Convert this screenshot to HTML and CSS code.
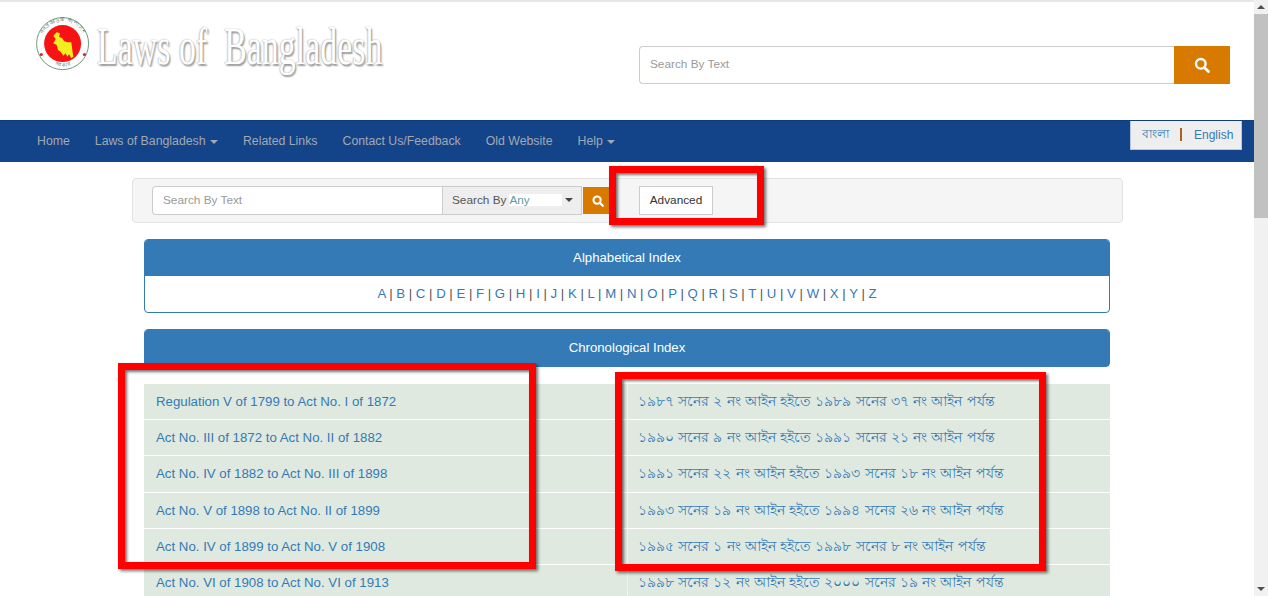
FILE: index.html
```html
<!DOCTYPE html>
<html lang="en">
<head>
<meta charset="utf-8">
<title>Laws of Bangladesh</title>
<link rel="stylesheet" href="styles.css">
</head>
<body>
<div class="shell">
  <div class="page">
    <header class="top">
      <a class="brand" href="#">
        <svg class="emblem" viewBox="0 0 54 54" width="54" height="54" aria-hidden="true">
          <defs>
            <path id="arc-top" d="M6.6 36A22.4 22.4 0 1 1 47.4 36"/>
            <path id="arc-bottom" d="M12 44A22.4 22.4 0 0 0 42 44"/>
          </defs>
          <circle cx="26.6" cy="26.6" r="26" fill="#fff" stroke="#6f9a7d" stroke-width="1"/>
          <text class="emblem-text"><textPath href="#arc-top" startOffset="50%" text-anchor="middle">গণপ্রজাতন্ত্রী বাংলাদেশ</textPath></text>
          <text class="emblem-text"><textPath href="#arc-bottom" startOffset="50%" text-anchor="middle">সরকার</textPath></text>
          <circle cx="26.6" cy="26.6" r="18.5" fill="#f71313"/>
          <path d="M20.7 15.3L24 16.3 23 19.7 26.3 21.3 28 24 31.3 25.3 35.3 25.3 36.3 33 37.3 39.7 35.3 41.3 33 37.3 31.3 39.7 29.7 36.3 27.3 38.7 24.7 34.7 22 33 20.7 28 17.3 26.3 19.7 22 17.3 18.7z" fill="#f5ee1e"/>
          <circle cx="5.3" cy="37.5" r="1.6" fill="#e02020"/>
          <circle cx="48.5" cy="37.5" r="1.6" fill="#e02020"/>
        </svg>
        <span class="wordmark">Laws of&nbsp; Bangladesh</span>
      </a>
      <form class="top-search">
        <input class="top-input" type="text" placeholder="Search By Text">
        <button class="top-btn" type="button" aria-label="Search">
          <svg viewBox="0 0 16 16" width="16" height="16"><circle cx="6.8" cy="6.8" r="4.8" fill="none" stroke="#fff" stroke-width="2.4"/><path d="M10.4 10.4l4 4" stroke="#fff" stroke-width="2.8" stroke-linecap="round"/></svg>
        </button>
      </form>
    </header>

    <nav class="nav">
      <a href="#">Home</a>
      <a href="#">Laws of Bangladesh <i class="caret"></i></a>
      <a href="#">Related Links</a>
      <a href="#">Contact Us/Feedback</a>
      <a href="#">Old Website</a>
      <a href="#">Help <i class="caret"></i></a>
      <div class="lang"><a href="#">বাংলা</a><span class="lang-sep"></span><a href="#">English</a></div>
    </nav>

    <main class="main">
      <form class="well">
        <input class="well-input" type="text" placeholder="Search By Text">
        <div class="well-select">
          <span>Search By</span>
          <span class="select-value">Any</span>
          <i class="caret dark"></i>
        </div>
        <button class="well-btn" type="button" aria-label="Search">
          <svg viewBox="0 0 16 16" width="12" height="12"><circle cx="6.8" cy="6.8" r="4.8" fill="none" stroke="#fff" stroke-width="2.8"/><path d="M10.4 10.4l4 4" stroke="#fff" stroke-width="3" stroke-linecap="round"/></svg>
        </button>
        <button class="advanced" type="button">Advanced</button>
      </form>

      <section class="panel">
        <h2 class="panel-head">Alphabetical Index</h2>
        <div class="alpha">
          <a href="#">A</a> | <a href="#">B</a> | <a href="#">C</a> | <a href="#">D</a> | <a href="#">E</a> | <a href="#">F</a> | <a href="#">G</a> | <a href="#">H</a> | <a href="#">I</a> | <a href="#">J</a> | <a href="#">K</a> | <a href="#">L</a> | <a href="#">M</a> | <a href="#">N</a> | <a href="#">O</a> | <a href="#">P</a> | <a href="#">Q</a> | <a href="#">R</a> | <a href="#">S</a> | <a href="#">T</a> | <a href="#">U</a> | <a href="#">V</a> | <a href="#">W</a> | <a href="#">X</a> | <a href="#">Y</a> | <a href="#">Z</a>
        </div>
      </section>

      <section class="panel bare">
        <h2 class="panel-head">Chronological Index</h2>
      </section>

      <div class="chrono">
        <a href="#">Regulation V of 1799 to Act No. I of 1872</a><a class="bn" href="#" lang="bn">১৯৮৭ সনের ২ নং আইন হইতে ১৯৮৯ সনের ৩৭ নং আইন পর্যন্ত</a>
        <a href="#">Act No. III of 1872 to Act No. II of 1882</a><a class="bn" href="#" lang="bn">১৯৯০ সনের ৯ নং আইন হইতে ১৯৯১ সনের ২১ নং আইন পর্যন্ত</a>
        <a href="#">Act No. IV of 1882 to Act No. III of 1898</a><a class="bn" href="#" lang="bn">১৯৯১ সনের ২২ নং আইন হইতে ১৯৯৩ সনের ১৮ নং আইন পর্যন্ত</a>
        <a href="#">Act No. V of 1898 to Act No. II of 1899</a><a class="bn" href="#" lang="bn">১৯৯৩ সনের ১৯ নং আইন হইতে ১৯৯৪ সনের ২৬ নং আইন পর্যন্ত</a>
        <a href="#">Act No. IV of 1899 to Act No. V of 1908</a><a class="bn" href="#" lang="bn">১৯৯৫ সনের ১ নং আইন হইতে ১৯৯৮ সনের ৮ নং আইন পর্যন্ত</a>
        <a href="#">Act No. VI of 1908 to Act No. VI of 1913</a><a class="bn" href="#" lang="bn">১৯৯৮ সনের ১২ নং আইন হইতে ২০০০ সনের ১৯ নং আইন পর্যন্ত</a>
      </div>
    </main>

    <div class="mark mark-adv"></div>
    <div class="mark mark-left"></div>
    <div class="mark mark-right"></div>
  </div>
  <aside class="scrollbar" aria-hidden="true">
    <span class="arrow up"></span>
    <span class="thumb"></span>
    <span class="arrow down"></span>
  </aside>
</div>
</body>
</html>
```

FILE: styles.css
```css
* { box-sizing: border-box; }
html, body { margin: 0; height: 596px; overflow: hidden; background: #fff; }
body { font-family: "Liberation Sans", Arial, "Noto Sans", sans-serif; font-size: 13px; color: #333; }
a { color: #337ab7; text-decoration: none; }
button { border: 0; padding: 0; margin: 0; cursor: pointer; font: inherit; }
input { font: inherit; margin: 0; }
input::placeholder { color: #999; opacity: 1; }

.shell { display: flex; height: 596px; }
.page { position: relative; flex: 1 1 auto; min-width: 0; height: 596px; overflow: hidden; }

.top { display: flex; align-items: flex-start; height: 120px; border-top: 2px solid #e7e7e7; }
.brand { display: flex; align-items: flex-start; margin: 15px 0 0 36px; width: 603px; flex: none; }
.emblem { flex: none; }
.emblem-text { font-size: 5.2px; letter-spacing: .55px; fill: #3f5f4c; }
.wordmark {
  display: block; margin: 0 0 0 7px; font-family: "Liberation Serif", serif; font-size: 53px; line-height: 58px;
  color: #fff; white-space: nowrap; transform: scaleX(.64); transform-origin: 0 0;
  text-shadow: 2px 2px 2px #999, -1px 0 2px #c4c4c4, 0 0 1px #b4b4b4;
}
.top-search { display: flex; margin-top: 44px; }
.top-input { width: 535px; height: 38px; padding: 0 10px 2px; font-size: 11.8px; border: 1px solid #ccc; border-right: 0; border-radius: 4px 0 0 4px; color: #555; }
.top-btn { display: flex; align-items: center; justify-content: center; width: 56px; height: 38px; background: #d87a00; }

.nav { display: flex; align-items: flex-start; height: 42px; padding-left: 24.5px; background: #134489; border-top: 1px solid #0f3c7c; font-size: 12.3px; }
.nav > a { padding: 0 12.5px; line-height: 40px; color: #a3a8b0; white-space: nowrap; }
.caret { display: inline-block; width: 0; height: 0; margin-left: 1px; vertical-align: middle; border-top: 4px solid; border-left: 4px solid transparent; border-right: 4px solid transparent; }
.lang { display: flex; align-items: center; margin: 0 12px 0 auto; height: 29px; width: 112px; padding: 0 0 1px 11px; background: #eee; border: 1px solid #b9c8dc; border-top: 0; font-size: 12px; }
.lang a { flex: none; }
.lang-sep { flex: none; width: 2px; height: 13px; margin: 0 12px 0 11px; background: #a8641a; }

.main { width: 991px; margin: 16px 0 0 132px; }
.well { display: flex; align-items: center; height: 45px; padding: 0 19px; background: #f5f5f5; border: 1px solid #e3e3e3; border-radius: 4px; font-size: 11.8px; }
.well-input { flex: none; width: 290px; height: 29px; padding: 0 10px 1px; font-size: 11.8px; border: 1px solid #ccc; border-right: 0; border-radius: 4px 0 0 4px; color: #555; }
.well-select { flex: none; display: flex; align-items: center; width: 140px; height: 29px; padding: 0 0 2px 9px; background: #eee; border: 1px solid #ccc; white-space: nowrap; color: #555; }
.select-value { width: 53px; height: 12px; line-height: 12px; margin-left: 3px; background: #fff; color: #5e9ca0; }
.caret.dark { margin-left: 3px; color: #444; }
.well-btn { flex: none; display: flex; align-items: center; justify-content: center; width: 30px; height: 27px; margin-left: 1px; background: #d87a00; }
.advanced { flex: none; width: 74px; height: 29px; padding-bottom: 2px; margin-left: 26px; font-size: 11.8px; background: #fff; border: 1px solid #ccc; color: #333; }

.panel { width: 966px; margin: 16px 0 0 12px; background: #fff; border: 1px solid #337ab7; border-radius: 4px; }
.panel-head { margin: 0; height: 36px; line-height: 36px; text-align: center; font-size: 13.2px; font-weight: 400; color: #fff; background: #337ab7; border-radius: 3px 3px 0 0; }
.alpha { height: 36px; line-height: 36px; text-align: center; font-size: 13.2px; color: #555; }
.panel.bare { height: 38px; }

.chrono { display: grid; grid-template-columns: 483px 483px; grid-auto-rows: 35.2px; row-gap: 1px; width: 966px; margin: 17px 0 0 12px; }
.chrono a { display: block; padding-left: 12px; line-height: 35px; font-size: 13.25px; background: #dfe9df; white-space: nowrap; }
.chrono a.bn { padding-left: 10px; font-size: 14px; word-spacing: .35px; border-left: 1px solid #eef3ee; }

.mark { position: absolute; border: 7px solid #f00; box-shadow: 2px 2px 3px rgba(0,0,0,.55), inset 2px 2px 3px rgba(0,0,0,.55); }
.mark-adv { left: 609px; top: 166px; width: 155px; height: 59px; }
.mark-left { left: 118px; top: 363px; width: 418px; height: 206px; }
.mark-right { left: 615px; top: 372px; width: 431px; height: 199px; }

.scrollbar { position: relative; flex: 0 0 14px; width: 14px; height: 596px; background: #f1f1f1; }
.thumb { position: absolute; left: 0; top: 14px; width: 14px; height: 204px; background: #c1c1c1; }
.arrow { position: absolute; left: 3px; width: 0; height: 0; border-left: 4px solid transparent; border-right: 4px solid transparent; }
.arrow.up { top: 5px; border-bottom: 4px solid #505050; }
.arrow.down { bottom: 5px; border-top: 4px solid #505050; }
```
